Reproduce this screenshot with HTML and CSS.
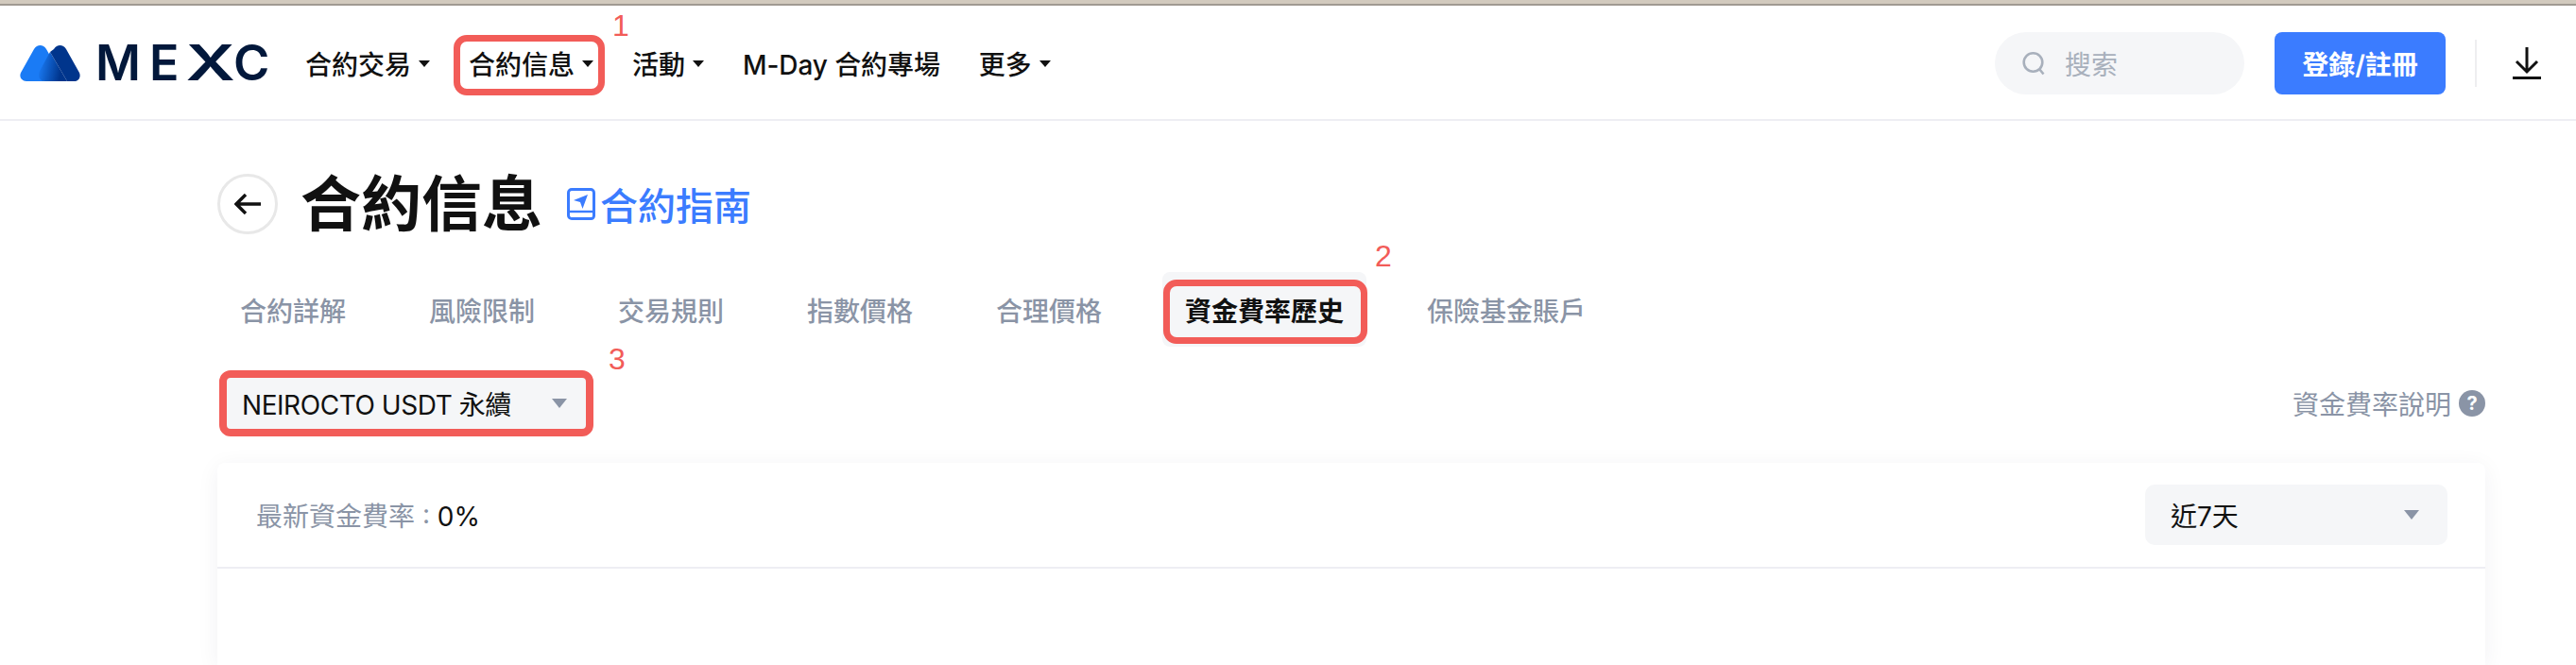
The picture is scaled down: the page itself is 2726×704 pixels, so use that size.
FILE: index.html
```html
<!DOCTYPE html>
<html lang="zh-Hant">
<head>
  <meta charset="UTF-8">
  <title>合約信息</title>
  <link rel="stylesheet" href="styles.css">
</head>
<body>
  <div class="top-strip"></div>

  <header class="header">
    <a class="logo">
      <svg class="logo-mark" viewBox="0 0 64 40" width="64" height="40">
        <defs>
          <linearGradient id="overlap" x1="0" y1="0.4" x2="1" y2="0.6">
            <stop offset="0" stop-color="#1a7bf5"/>
            <stop offset="0.8" stop-color="#00358c"/>
          </linearGradient>
        </defs>
        <path d="M15 5c3-5.500 10-5.500 13 0l4 7-7 27H7c-5 0-8-4.500-6-9z" fill="#1a7bf5"/>
        <path d="M32 8L21 28c-2.500 5 0 11 5 11h24z" fill="url(#overlap)"/>
        <path d="M32 8l4-3c3-5.500 10-5.500 13 0l14 25c2 4.500-1 9-5 9H50z" fill="#00358c"/>
      </svg>
      <span class="logo-text">ME<span class="logo-x">X</span>C</span>
    </a>
    <nav class="nav">
      <a class="nav-item">合約交易<i class="caret"></i></a>
      <a class="nav-item nav-item-marked">合約信息<i class="caret"></i><span class="mark-no">1</span></a>
      <a class="nav-item">活動<i class="caret"></i></a>
      <a class="nav-item nav-item-text">M-Day 合約專場</a>
      <a class="nav-item">更多<i class="caret"></i></a>
    </nav>
    <div class="header-right">
      <div class="search">
        <svg viewBox="0 0 24 26" width="24" height="26" fill="none" stroke="#a8b0bc" stroke-width="2.6">
          <circle cx="11.5" cy="12" r="9.8"/>
          <path d="M18.5 19.5l4 5"/>
        </svg>
        <span>搜索</span>
      </div>
      <button class="login-btn">登錄/註冊</button>
      <div class="divider"></div>
      <svg class="download" viewBox="0 0 30 34" width="30" height="34" fill="none" stroke="#111" stroke-width="3">
        <path d="M15 0v26M4 15l11 11 11-11"/>
        <path d="M0 32.5h30"/>
      </svg>
    </div>
  </header>

  <main class="page">
    <div class="title-row">
      <div class="back">
        <svg viewBox="0 0 28 22" width="28" height="22" fill="none" stroke="#111" stroke-width="3.4">
          <path d="M12 1L2 11l10 10M2 11h26"/>
        </svg>
      </div>
      <h1 class="title">合約信息</h1>
      <a class="guide">
        <svg viewBox="0 0 30 34" width="30" height="34" fill="none" stroke="#3b7cff" stroke-width="3">
          <path d="M5 1.500h20a3.500 3.500 0 0 1 3.500 3.500v24.500a3 3 0 0 1-3 3H5a3.500 3.500 0 0 1-3.500-3.500V5A3.500 3.500 0 0 1 5 1.500z"/>
          <path d="M1.500 25h27" stroke-width="2.400"/>
          <path d="M22 7L7 13l7 2 2.500 7z" fill="#3b7cff" stroke="none"/>
        </svg>
        <span>合約指南</span>
      </a>
    </div>

    <div class="tabs">
      <a class="tab">合約詳解</a>
      <a class="tab">風險限制</a>
      <a class="tab">交易規則</a>
      <a class="tab">指數價格</a>
      <a class="tab">合理價格</a>
      <a class="tab tab-active">資金費率歷史<span class="mark-no">2</span></a>
      <a class="tab">保險基金賬戶</a>
    </div>

    <div class="filter-row">
      <div class="symbol-select">
        <span>NEIROCTO USDT 永續</span>
        <i class="caret caret-grey"></i>
        <span class="mark-no">3</span>
      </div>
      <a class="help">
        <span>資金費率說明</span>
        <span class="help-icon">?</span>
      </a>
    </div>

    <section class="card">
      <div class="card-head">
        <div class="latest"><span class="latest-label">最新資金費率 : </span>0%</div>
        <div class="range-select">
          <span>近7天</span>
          <i class="caret caret-grey"></i>
        </div>
      </div>
    </section>
  </main>
</body>
</html>
```

FILE: styles.css
```css
*{box-sizing:border-box}
html,body{height:100%}
body{margin:0;background:#fff;color:#111;font-family:Inter,"Noto Sans CJK TC",sans-serif;font-size:28px;overflow:hidden}
a{color:inherit;text-decoration:none}

.top-strip{height:6px;background:#d2cabe;border-bottom:2px solid #a09a92}

/* header */
.header{height:122px;padding:2px 37px 0 21px;display:flex;align-items:center;border-bottom:2px solid #eeeef3}
.logo{display:flex;align-items:center;gap:16px;width:302px;flex-shrink:0}
.logo-text{font-size:52px;font-weight:600;line-height:1;letter-spacing:9px;color:#02183b;white-space:nowrap}
.logo-x{display:inline-block;margin:0 5px 0 6px;letter-spacing:0;transform:scaleX(1.4)}
.nav{display:flex;align-items:center;gap:41px}
.nav-item{position:relative;display:flex;align-items:center;height:64px;font-weight:500;white-space:nowrap}
.nav-item-text{letter-spacing:-.1px}
.nav-item-marked::after{content:"";position:absolute;left:-16px;right:-12px;top:2px;bottom:-2px;border:7px solid #f25c58;border-radius:14px}
.caret{display:block;width:0;height:0;margin-left:8px;border-left:6px solid transparent;border-right:6px solid transparent;border-top:7px solid #111}
.caret-grey{margin-left:0;border-left-width:8px;border-right-width:8px;border-top:10px solid #8a94a6}
.mark-no{position:absolute;font-family:"Liberation Sans",sans-serif;font-size:32px;font-weight:400;line-height:1;color:#f25c58}
.nav-item .mark-no{left:152px;top:-24px}

.header-right{margin-left:auto;display:flex;align-items:center}
.search{width:264px;height:66px;padding-left:29px;display:flex;align-items:center;gap:21px;background:#f5f6f8;border-radius:33px;color:#a8b0bc}
.login-btn{width:181px;height:66px;margin-left:32px;background:#3b7cff;border:none;border-radius:8px;color:#fff;font:600 28px Inter,"Noto Sans CJK TC",sans-serif}
.divider{width:2px;height:50px;margin-left:31px;background:#eeeef0}
.download{margin-left:38px}

/* content */
.page{width:2400px;margin-left:230px}
.title-row{display:flex;align-items:center;margin-top:56px;height:64px}
.back{width:64px;height:64px;display:flex;align-items:center;justify-content:center;border:3px solid #e8e8e8;border-radius:50%}
.title{margin:0 0 0 24px;font-size:64px;font-weight:700;line-height:1}
.guide{display:flex;align-items:center;gap:5px;margin-left:26px;font-size:40px;font-weight:500;color:#3b7cff}

.tabs{display:flex;gap:40px;margin-top:40px;height:79px}
.tab{position:relative;display:flex;align-items:center;padding:0 24px;border-radius:8px;color:#8a94a6;font-weight:500;white-space:nowrap}
.tab-active{background:#f5f6f8;color:#111;font-weight:700}
.tab-active::after{content:"";position:absolute;left:1px;right:-1px;top:8px;bottom:3px;border:7px solid #f25c58;border-radius:14px}
.tab-active .mark-no{left:225px;top:-33px}

.filter-row{display:flex;align-items:center;justify-content:space-between;margin-top:25px;height:70px}
.symbol-select{position:relative;margin-left:2px;width:396px;height:70px;padding:0 20px 0 16px;display:flex;align-items:center;justify-content:space-between;background:#f5f6f8;border:8px solid #f25c58;border-radius:12px;white-space:nowrap;letter-spacing:-.45px}
.symbol-select .mark-no{left:404px;top:-36px}
.help{display:flex;align-items:center;gap:8px;color:#8a94a6}
.help-icon{width:28px;height:28px;display:flex;align-items:center;justify-content:center;background:#8a94a6;border-radius:50%;color:#fff;font-size:20px;font-weight:700;line-height:1}

.card{margin-top:28px;height:214px;border-radius:8px 8px 0 0;background:#fff;box-shadow:0 4px 24px rgba(30,40,70,.06)}
.card-head{height:112px;padding:0 40px 0 41px;display:flex;align-items:center;justify-content:space-between;border-bottom:2px solid #eeeef3}
.latest-label{color:#8a94a6;white-space:pre}
.range-select{width:320px;height:64px;padding:0 30px 0 27px;display:flex;align-items:center;justify-content:space-between;background:#f5f6f8;border-radius:10px}
```
